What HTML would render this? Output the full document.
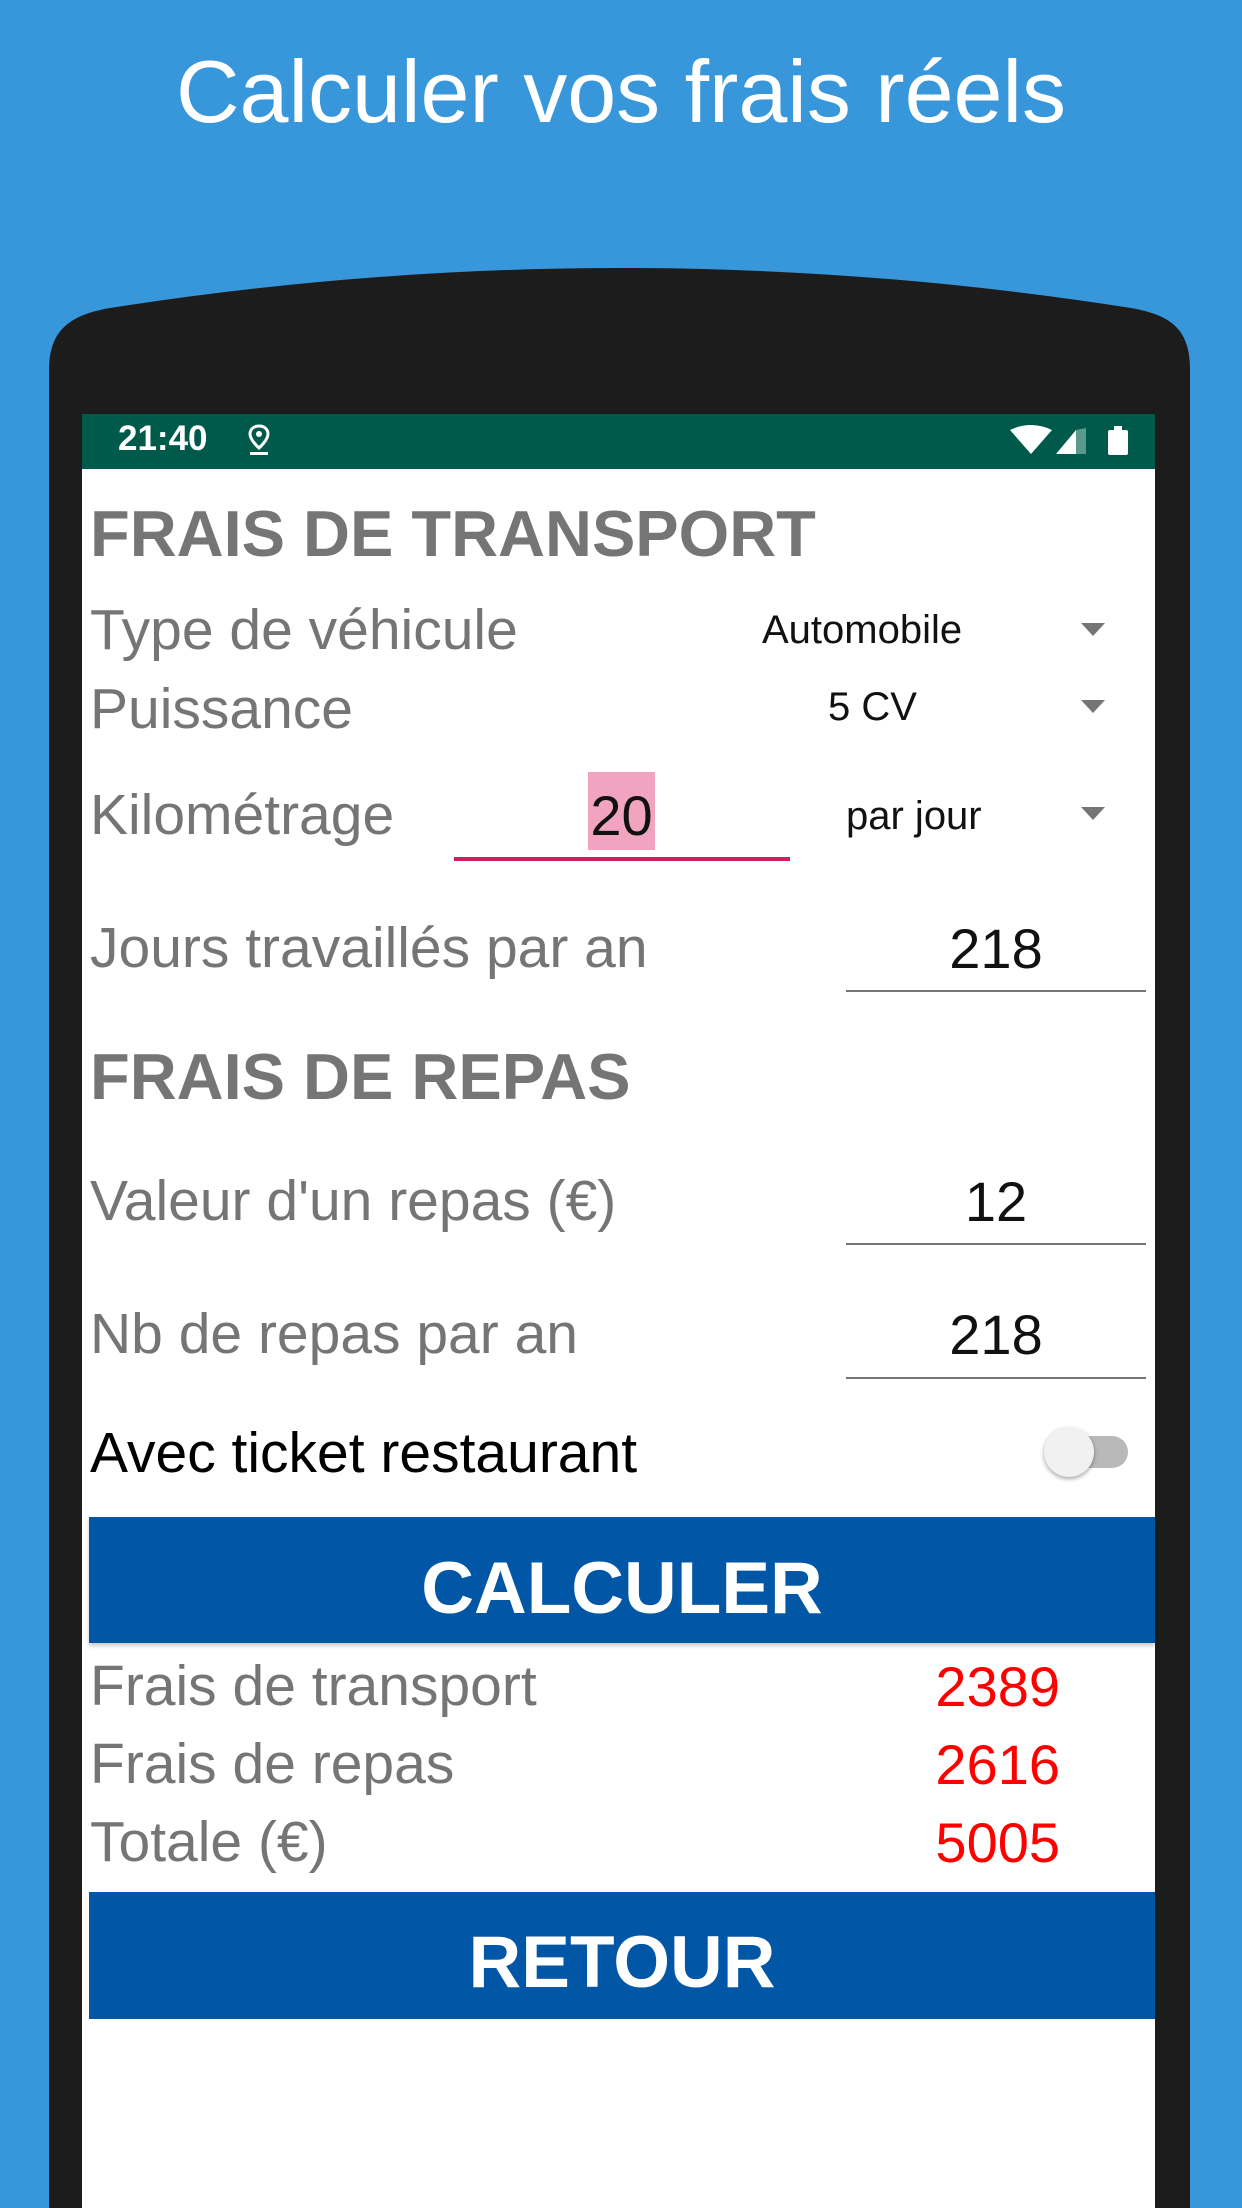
<!DOCTYPE html>
<html><head><meta charset="utf-8"><style>
*{margin:0;padding:0;box-sizing:border-box}
body{width:1242px;height:2208px;background:#3897db;position:relative;overflow:hidden;font-family:"Liberation Sans",sans-serif}
.a{position:absolute;line-height:1;white-space:nowrap}
.g{color:#757575;font-size:57px;left:90px}
.h{color:#757575;font-size:65px;font-weight:bold;left:90px}
.s{color:#111;font-size:40px}
.tri{position:absolute;width:0;height:0;border-left:12px solid transparent;border-right:12px solid transparent;border-top:13px solid #757575;left:1081px}
.ul{position:absolute;left:846px;width:300px;height:2px;background:#757575}
.num{color:#111;font-size:56px;left:846px;width:300px;text-align:center}
.red{color:#f00;font-size:56px;right:182px}
.btn{position:absolute;left:89px;width:1066px;background:#0156a5;color:#fff;font-size:73px;font-weight:bold;text-align:center}
</style></head><body>
<div class="a" style="top:48px;left:0;width:1242px;text-align:center;color:#fff;font-size:88px">Calculer vos frais réels</div>
<svg style="position:absolute;left:0;top:0" width="1242" height="2208"><path d="M49,2208 L49,370 C49,330 70,315 110,308 Q621,228 1131,308 C1172,315 1190,330 1190,370 L1190,2208 Z" fill="#1c1c1c"/></svg>
<div style="position:absolute;left:82px;top:414px;width:1073px;height:1794px;background:#fff"></div>
<div style="position:absolute;left:82px;top:414px;width:1073px;height:55px;background:#005a4c"></div>
<div class="a" style="top:421px;left:118px;color:#fff;font-size:35px;font-weight:bold">21:40</div>
<svg style="position:absolute;left:246px;top:423px" width="26" height="34" viewBox="0 0 26 34"><path d="M13,3 C7,3 4,7 4,11 C4,17 13,25 13,25 C13,25 22,17 22,11 C22,7 19,3 13,3 Z" fill="none" stroke="#fff" stroke-width="3"/><circle cx="13" cy="11" r="3" fill="#fff"/><rect x="4" y="29" width="18" height="3" fill="#fff"/></svg>
<svg style="position:absolute;left:1008px;top:424px" width="126" height="32" viewBox="0 0 126 32"><path d="M2,6 Q23,-4 44,6 L23,30 Z" fill="#fff"/><path d="M48,30 L68,6 L68,30 Z" fill="#fff"/><path d="M68,6 L78,4 L78,30 L68,30 Z" fill="#5a9a8c"/><rect x="100" y="6" width="20" height="25" rx="2" fill="#fff"/><rect x="106" y="2" width="8" height="5" fill="#fff"/></svg>
<div class="a h" style="top:501px">FRAIS DE TRANSPORT</div>
<div class="a g" style="top:602px">Type de véhicule</div>
<div class="a s" style="top:610px;left:762px">Automobile</div>
<div class="tri" style="top:623px"></div>
<div class="a g" style="top:681px">Puissance</div>
<div class="a s" style="top:687px;left:828px">5 CV</div>
<div class="tri" style="top:700px"></div>
<div class="a g" style="top:787px">Kilométrage</div>
<div style="position:absolute;left:588px;top:772px;width:67px;height:78px;background:#f0a4c0"></div>
<div class="a" style="top:788px;left:588px;width:67px;text-align:center;font-size:56px;color:#111">20</div>
<div style="position:absolute;left:454px;top:857px;width:336px;height:4px;background:#d81b60"></div>
<div class="a s" style="top:796px;left:846px">par jour</div>
<div class="tri" style="top:807px"></div>
<div class="a g" style="top:920px">Jours travaillés par an</div>
<div class="a num" style="top:921px">218</div>
<div class="ul" style="top:990px"></div>
<div class="a h" style="top:1044px">FRAIS DE REPAS</div>
<div class="a g" style="top:1173px">Valeur d'un repas (€)</div>
<div class="a num" style="top:1174px">12</div>
<div class="ul" style="top:1243px"></div>
<div class="a g" style="top:1306px">Nb de repas par an</div>
<div class="a num" style="top:1307px">218</div>
<div class="ul" style="top:1377px"></div>
<div class="a g" style="top:1425px;color:#000">Avec ticket restaurant</div>
<div style="position:absolute;left:1056px;top:1436px;width:72px;height:32px;border-radius:16px;background:#b9b9b9"></div>
<div style="position:absolute;left:1044px;top:1427px;width:50px;height:50px;border-radius:50%;background:#f1f1f1;box-shadow:0 2px 4px rgba(0,0,0,.35)"></div>
<div class="btn" style="top:1517px;height:126px;box-shadow:0 3px 4px rgba(0,0,0,.2)"><div class="a" style="top:35px;left:0;width:1066px;text-align:center">CALCULER</div></div>
<div class="a g" style="top:1658px">Frais de transport</div>
<div class="a red" style="top:1659px">2389</div>
<div class="a g" style="top:1736px">Frais de repas</div>
<div class="a red" style="top:1737px">2616</div>
<div class="a g" style="top:1814px">Totale (€)</div>
<div class="a red" style="top:1815px">5005</div>
<div class="btn" style="top:1892px;height:127px"><div class="a" style="top:34px;left:0;width:1066px;text-align:center">RETOUR</div></div>
</body></html>
